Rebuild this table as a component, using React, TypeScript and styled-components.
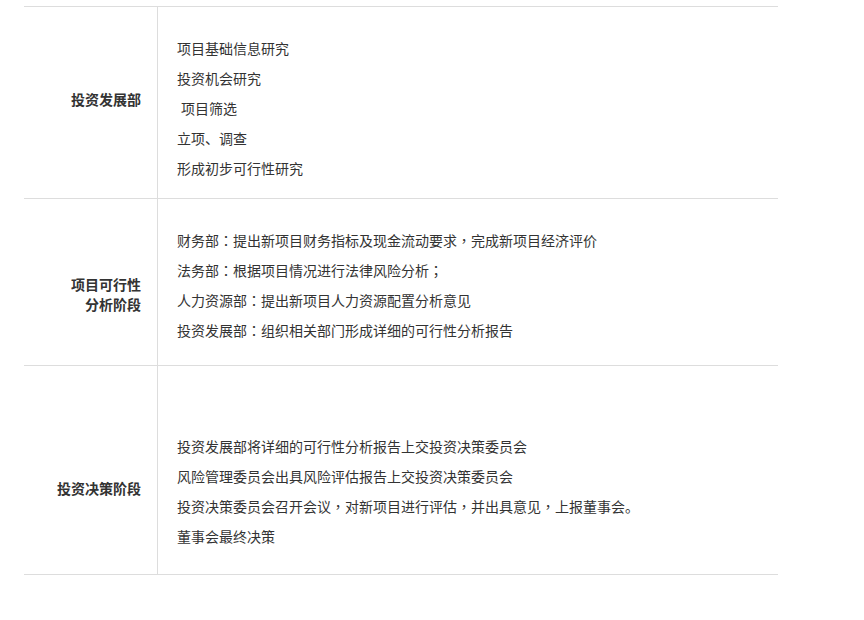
import React from 'react';
import styled, { createGlobalStyle } from 'styled-components';

const GlobalStyle = createGlobalStyle`
    body {
        margin: 0;
        background: #fff;
        font-family: "Liberation Sans", "Noto Sans CJK SC", sans-serif;
        color: #333;
    }
`;

const Page = styled.div`
    padding: 6px 0 0 24px;
`;

const Table = styled.div`
    width: 754px;
    border-top: 1px solid #ddd;
`;

const Row = styled.div`
    display: grid;
    grid-template-columns: 134px 1fr;
    border-bottom: 1px solid #ddd;
`;

const Label = styled.div<{ top: number }>`
    border-right: 1px solid #ddd;
    padding: ${(p) => p.top}px 16px 0 0;
    text-align: right;
    font-size: 14px;
    font-weight: bold;
    line-height: 20px;
    color: #333;
`;

const Content = styled.div<{ top: number; bottom: number }>`
    padding: ${(p) => p.top}px 0 ${(p) => p.bottom}px 19px;
`;

const Item = styled.p`
    margin: 0;
    font-size: 14px;
    line-height: 30px;
    color: #333;
`;

// 全形冒號、逗號、分號置中顯示
const Punct = styled.span`
    font-family: "Noto Sans CJK TC", sans-serif;
    line-height: 0;
`;

const renderText = (text: string) =>
    text.split(/([：，；])/).map((part, i) =>
        /^[：，；]$/.test(part) ? <Punct key={i}>{part}</Punct> : part
    );

interface Section {
    label: string[];
    labelTop: number;
    top: number;
    bottom: number;
    items: string[];
}

const sections: Section[] = [
    {
        label: ['投资发展部'],
        labelTop: 83,
        top: 27,
        bottom: 14,
        items: ['项目基础信息研究', '投资机会研究', '\u00a0项目筛选', '立项、调查', '形成初步可行性研究'],
    },
    {
        label: ['项目可行性', '分析阶段'],
        labelTop: 76,
        top: 27,
        bottom: 19,
        items: [
            '财务部：提出新项目财务指标及现金流动要求，完成新项目经济评价',
            '法务部：根据项目情况进行法律风险分析；',
            '人力资源部：提出新项目人力资源配置分析意见',
            '投资发展部：组织相关部门形成详细的可行性分析报告',
        ],
    },
    {
        label: ['投资决策阶段'],
        labelTop: 113,
        top: 66,
        bottom: 22,
        items: [
            '投资发展部将详细的可行性分析报告上交投资决策委员会',
            '风险管理委员会出具风险评估报告上交投资决策委员会',
            '投资决策委员会召开会议，对新项目进行评估，并出具意见，上报董事会。',
            '董事会最终决策',
        ],
    },
];

const App = () => {
    return (
        <Page>
            <GlobalStyle />
            <Table>
                {sections.map((s, i) => (
                    <Row key={i}>
                        <Label top={s.labelTop}>
                            {s.label.map((l, j) => (
                                <div key={j}>{l}</div>
                            ))}
                        </Label>
                        <Content top={s.top} bottom={s.bottom}>
                            {s.items.map((t, j) => (
                                <Item key={j}>{renderText(t)}</Item>
                            ))}
                        </Content>
                    </Row>
                ))}
            </Table>
        </Page>
    );
};

export default App;
